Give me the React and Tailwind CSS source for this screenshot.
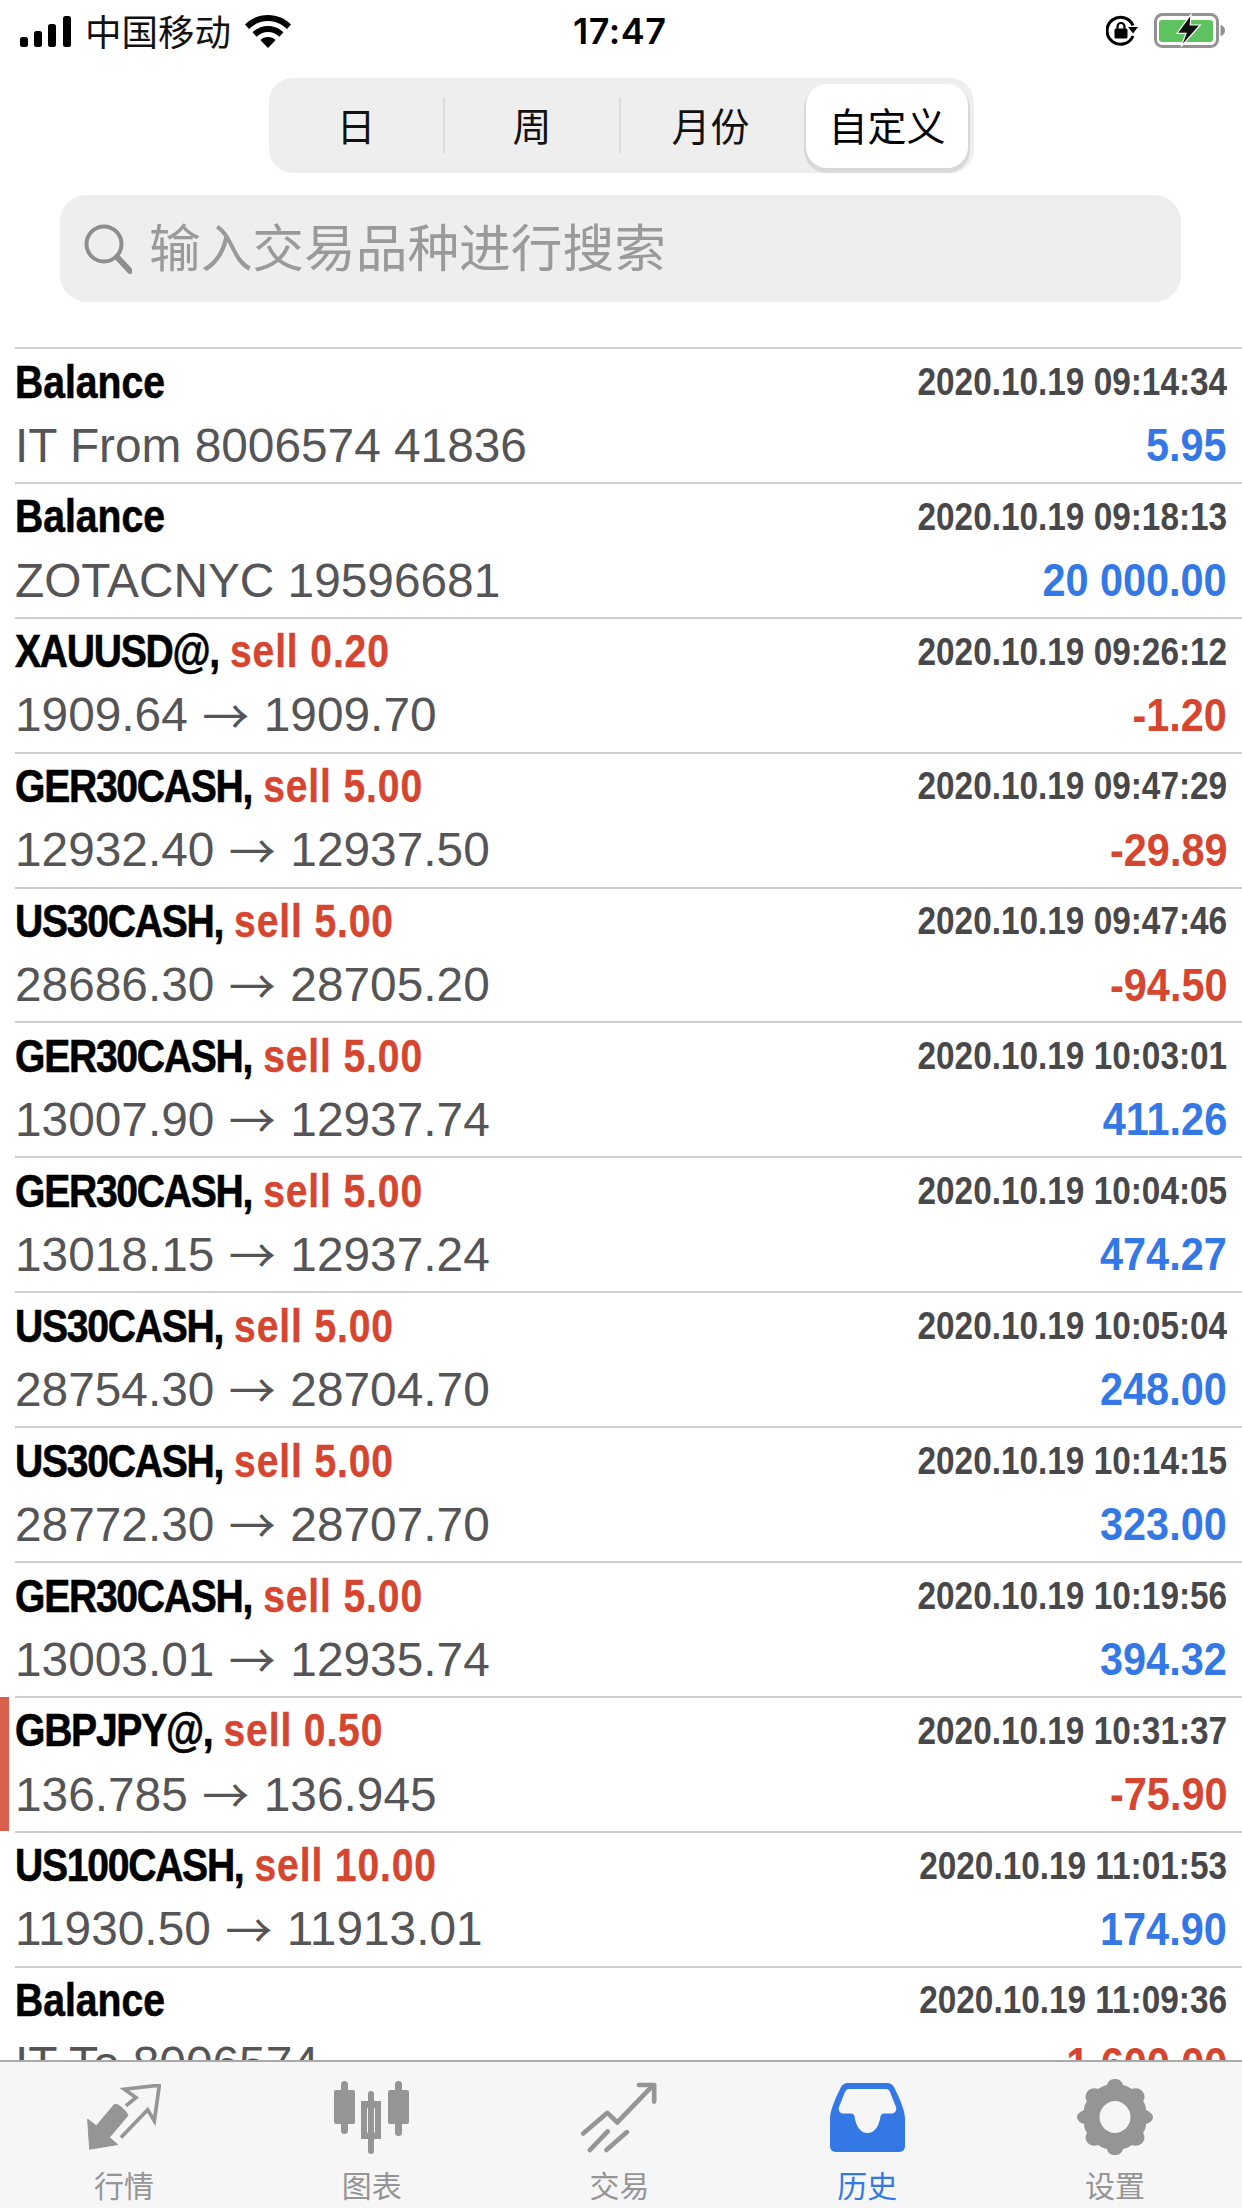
const SANS = '"Liberation Sans", Arial, sans-serif';
const CJK = '"Noto Sans CJK SC", "Liberation Sans", sans-serif';

const rows = [
  { t: "Balance", time: "2020.10.19 09:14:34", sub: "IT From 8006574 41836", amt: "5.95" },
  { t: "Balance", time: "2020.10.19 09:18:13", sub: "ZOTACNYC 19596681", amt: "20 000.00" },
  { t: "XAUUSD@,", sell: "sell 0.20", time: "2020.10.19 09:26:12", sub: "1909.64 → 1909.70", amt: "-1.20", neg: true },
  { t: "GER30CASH,", sell: "sell 5.00", time: "2020.10.19 09:47:29", sub: "12932.40 → 12937.50", amt: "-29.89", neg: true },
  { t: "US30CASH,", sell: "sell 5.00", time: "2020.10.19 09:47:46", sub: "28686.30 → 28705.20", amt: "-94.50", neg: true },
  { t: "GER30CASH,", sell: "sell 5.00", time: "2020.10.19 10:03:01", sub: "13007.90 → 12937.74", amt: "411.26" },
  { t: "GER30CASH,", sell: "sell 5.00", time: "2020.10.19 10:04:05", sub: "13018.15 → 12937.24", amt: "474.27" },
  { t: "US30CASH,", sell: "sell 5.00", time: "2020.10.19 10:05:04", sub: "28754.30 → 28704.70", amt: "248.00" },
  { t: "US30CASH,", sell: "sell 5.00", time: "2020.10.19 10:14:15", sub: "28772.30 → 28707.70", amt: "323.00" },
  { t: "GER30CASH,", sell: "sell 5.00", time: "2020.10.19 10:19:56", sub: "13003.01 → 12935.74", amt: "394.32" },
  { t: "GBPJPY@,", sell: "sell 0.50", time: "2020.10.19 10:31:37", sub: "136.785 → 136.945", amt: "-75.90", neg: true, mark: true },
  { t: "US100CASH,", sell: "sell 10.00", time: "2020.10.19 11:01:53", sub: "11930.50 → 11913.01", amt: "174.90" },
  { t: "Balance", time: "2020.10.19 11:09:36", sub: "IT To 8006574", amt: "-1 600.00", neg: true },
];

function Sub({ text }) {
  const parts = text.split(" → ");
  if (parts.length < 2) return <span>{text}</span>;
  return (
    <span className="inline-flex items-center">
      <span>{parts[0]}</span>
      <span className="mx-[14.500px] text-[47px] leading-none -translate-y-[2px]" style={{ fontFamily: '"Noto Sans CJK SC", sans-serif' }}>→</span>
      <span>{parts[1]}</span>
    </span>
  );
}

function Row({ r }) {
  return (
    <div className="relative h-[134.9px] shrink-0 pl-[15px]">
      {r.mark && <div className="absolute left-0 top-px w-[9px] h-[134px] bg-[#d9604c]" />}
      <div className="h-full border-t-2 border-[#cfcfcf] pr-[15px] flex flex-col">
        <div className="h-[66px] flex items-center justify-between whitespace-nowrap">
          <span className="text-[46px] font-bold text-black origin-left scale-x-[0.85] inline-block [-webkit-text-stroke:0.6px_#000]" style={{ fontFamily: SANS }}>
            <span className={r.sell ? "tracking-[-1.500px]" : ""}>{r.t}</span>
            {r.sell && <span className="text-[#d5452f] ml-[13px] tracking-[1px] [-webkit-text-stroke:0.3px_#d5452f]">{r.sell}</span>}
          </span>
          <span className="text-[39px] font-bold text-[#48484a] origin-right scale-x-[0.855] inline-block" style={{ fontFamily: SANS }}>{r.time}</span>
        </div>
        <div className="h-[61px] flex items-center justify-between whitespace-nowrap">
          <span className="text-[47.800px] text-[#555557]" style={{ fontFamily: SANS }}><Sub text={r.sub} /></span>
          <span className={`text-[46px] font-bold origin-right scale-x-[0.9] inline-block ${r.neg ? "text-[#d5452f]" : "text-[#3478e6]"}`} style={{ fontFamily: SANS }}>{r.amt}</span>
        </div>
      </div>
    </div>
  );
}

function StatusBar() {
  return (
    <div className="h-[78px] shrink-0 flex items-start justify-between relative">
      <div className="flex items-center pl-5 pt-[13px]">
        <svg width="52" height="31" viewBox="0 0 52 31" fill="#000">
          <rect x="0" y="21" width="8" height="10" rx="2.500" />
          <rect x="14" y="15" width="8" height="16" rx="2.500" />
          <rect x="28" y="8" width="8" height="23" rx="2.500" />
          <rect x="43" y="0" width="8" height="31" rx="2.500" />
        </svg>
        <span className="ml-[13px] text-[36.500px] leading-[36px] text-[#111]" style={{ fontFamily: CJK }}>中国移动</span>
        <svg className="ml-[14px]" width="46" height="33" viewBox="0 0 46 33" fill="#000">
          <path d="M23 0C14 0 6 3.500 0 9.500l4 4.500C9 9 15.700 6 23 6s14 3 19 8l4-4.500C40 3.500 32 0 23 0z" />
          <path d="M23 11c-6 0-11.500 2.400-15.500 6.300l4.200 4.500c3-2.900 7-4.700 11.300-4.700s8.300 1.800 11.300 4.700l4.200-4.500C34.500 13.400 29 11 23 11z" />
          <path d="M23 22c-3 0-5.700 1.100-7.700 3L23 33l7.700-8c-2-1.900-4.700-3-7.700-3z" />
        </svg>
      </div>
      <span className="absolute left-[573px] top-[10px] text-[36px] leading-[42px] font-semibold tracking-[0.5px] text-black" style={{ fontFamily: '"Inter", sans-serif' }}>17:47</span>
      <div className="flex items-center pr-4 pt-[13px] gap-4">
        <svg width="32" height="32" viewBox="0 0 32 32" fill="none">
          <path d="M27 21A13.500 13.500 0 1 1 27 10.500" stroke="#000" strokeWidth="3" />
          <path d="M32 12h-10l5 6.500z" fill="#000" />
          <rect x="8.500" y="13.500" width="13" height="10" rx="1.500" fill="#000" />
          <path d="M11.500 14v-2.500a3.500 3.500 0 0 1 7 0V14" stroke="#000" strokeWidth="2.200" />
        </svg>
        <svg width="72" height="36" viewBox="0 0 72 36" fill="none">
          <rect x="1.500" y="1.500" width="62" height="32" rx="7" stroke="#929292" strokeWidth="3" />
          <rect x="5" y="7" width="54" height="22" rx="3" fill="#5ec25f" />
          <path d="M66.500 12c3 .5 4.500 3 4.500 5.500s-1.500 5-4.500 5.500z" fill="#929292" />
          <path d="M37 1.300L23 20.300h9L27 33.700 46.300 12H36.300z" fill="#111" stroke="#fff" strokeWidth="1.200" />
        </svg>
      </div>
    </div>
  );
}

function Segments() {
  const items = ["日", "周", "月份"];
  return (
    <div className="h-[95px] w-[705px] ml-[269px] shrink-0 rounded-[24px] bg-[#eeeeee] flex items-center relative" style={{ fontFamily: CJK }}>
      {items.map((s, i) => (
        <div key={s} className={`w-[176px] h-[55px] pb-[2px] flex items-center justify-center text-[39px] leading-none text-[#111] ${i < 2 ? "border-r-2 border-[#dcdcdc]" : i === 2 ? "pl-[3px]" : ""}`}>{s}</div>
      ))}
      <div className="w-[162px] h-[84px] ml-[9px] pb-[2px] rounded-[21px] bg-white flex items-center justify-center text-[39px] leading-none text-black shadow-[0_3px_0_2px_#d9d9d9]">自定义</div>
    </div>
  );
}

function Search() {
  return (
    <div className="mt-[22px] mx-[60px] w-[1121px] h-[107px] shrink-0 rounded-[27px] bg-[#eeeeee] flex items-center pl-6" style={{ fontFamily: CJK }}>
      <svg width="48" height="50" viewBox="0 0 48 50" fill="none" stroke="#8e8e8e">
        <circle cx="20" cy="20" r="17.500" strokeWidth="4" />
        <path d="M33 33l13 14" strokeWidth="6" strokeLinecap="round" />
      </svg>
      <span className="ml-[17px] pb-[8px] text-[51.700px] leading-none text-[#9a9a9a] whitespace-nowrap">输入交易品种进行搜索</span>
    </div>
  );
}

const G = "#959595";
const Icons = {
  quote: (
    <svg width="75" height="67" viewBox="45 45 225 200" fill="none">
      <path d="M50 150L56 240 140 226 115 205 170 140C172 130 140 100 130 106L76 170z" fill={G} stroke={G} strokeWidth="3" strokeLinejoin="round" />
      <path d="M165 110L195 85 160 60 265 48 250 155 230 122 150 205" stroke={G} strokeWidth="11" />
    </svg>
  ),
  chart: (
    <svg width="75" height="73" viewBox="0 0 75 73" fill={G}>
      <rect x="7" y="0" width="7" height="53" rx="3.500" />
      <rect x="0" y="9" width="21" height="34" rx="2" />
      <rect x="61" y="0" width="7" height="55" rx="3.500" />
      <rect x="54" y="9" width="21" height="34" rx="2" />
      <rect x="34" y="10" width="6" height="63" rx="3" />
      <path fillRule="evenodd" d="M27 20h20v38H27zM33 29v21a3 3 0 0 0 3 3h2a3 3 0 0 0 3-3V29a3 3 0 0 0-3-3h-2a3 3 0 0 0-3 3z" />
    </svg>
  ),
  trade: (
    <svg width="80" height="73" viewBox="30 30 240 220" fill="none" stroke={G} strokeWidth="14" strokeLinecap="round" strokeLinejoin="round">
      <path d="M42 188L115 126 145 155 248 48" />
      <path d="M210 42H256V92" />
      <path d="M62 238L116 182" />
      <path d="M112 238L174 184" />
    </svg>
  ),
  history: (
    <svg width="75" height="69" viewBox="0 0 75 69" fill="none">
      <path fillRule="evenodd" fill="#3478e6" d="M19 0h37c5 0 7 2 8.500 5C70 16 75 28 75 36v27c0 3-2 6-6 6H6c-4 0-6-3-6-6V36C0 28 5 16 10.500 5 12 2 14 0 19 0zM19 6c-2 0-3 1-4 3L9 24c-1 3 .5 6 4 6.500h8c2 0 3 1 3.500 3C26 43 30 50 37.500 50s11.500-7 13-16.500c.5-2 1.500-3 3.500-3h8c3.500-.5 5-3.500 4-6.500L60 9c-1-2-2-3-4-3z" />
    </svg>
  ),
  gear: (
    <svg width="76" height="76" viewBox="0 0 76 76">
      <path fillRule="evenodd" fill={G} d="M38 0c4 0 7 2 8 6 4 1 6 2 9 4 4-2 9 0 11 3 2 3 2 7 0 9 2 3 3 6 3 9 4 2 7 4 7 7s-3 6-7 7c0 3-1 6-3 9 2 3 2 6 0 9-2 3-7 5-11 3-3 2-5 3-9 4-1 4-4 6-8 6s-7-2-8-6c-4-1-6-2-9-4-4 2-9 0-11-3-2-3-2-6 0-9-2-3-3-6-3-9-4-1-7-4-7-7s3-5 7-7c0-3 1-6 3-9-2-2-2-6 0-9 2-3 7-5 11-3 3-2 5-3 9-4 1-4 4-6 8-6zM38 22c-8 0-15.500 7-15.500 16s7.500 16 15.500 16 15.500-7 15.500-16-7.500-16-15.500-16z" />
    </svg>
  ),
};

function Tab({ icon, label, active }) {
  return (
    <div className="flex-1 flex flex-col items-center">
      <div className="h-[74px] flex items-center justify-center">{Icons[icon]}</div>
      <span className={`mt-[13px] text-[30px] leading-[34px] ${active ? "text-[#3478e6]" : "text-[#959595]"}`} style={{ fontFamily: CJK }}>{label}</span>
    </div>
  );
}

export default function App() {
  return (
    <div className="w-[1242px] h-[2208px] bg-white overflow-hidden flex flex-col">
      <StatusBar />
      <Segments />
      <Search />
      <div className="flex-1 min-h-0 overflow-hidden mt-[45px] flex flex-col">
        {rows.map((r, i) => <Row key={i} r={r} />)}
      </div>
      <div className="h-[148px] shrink-0 bg-[#f6f6f6] border-t-2 border-[#aaaaaa] flex pt-[18px] pr-[3px]">
        <Tab icon="quote" label="行情" />
        <Tab icon="chart" label="图表" />
        <Tab icon="trade" label="交易" />
        <Tab icon="history" label="历史" active />
        <Tab icon="gear" label="设置" />
      </div>
    </div>
  );
}
